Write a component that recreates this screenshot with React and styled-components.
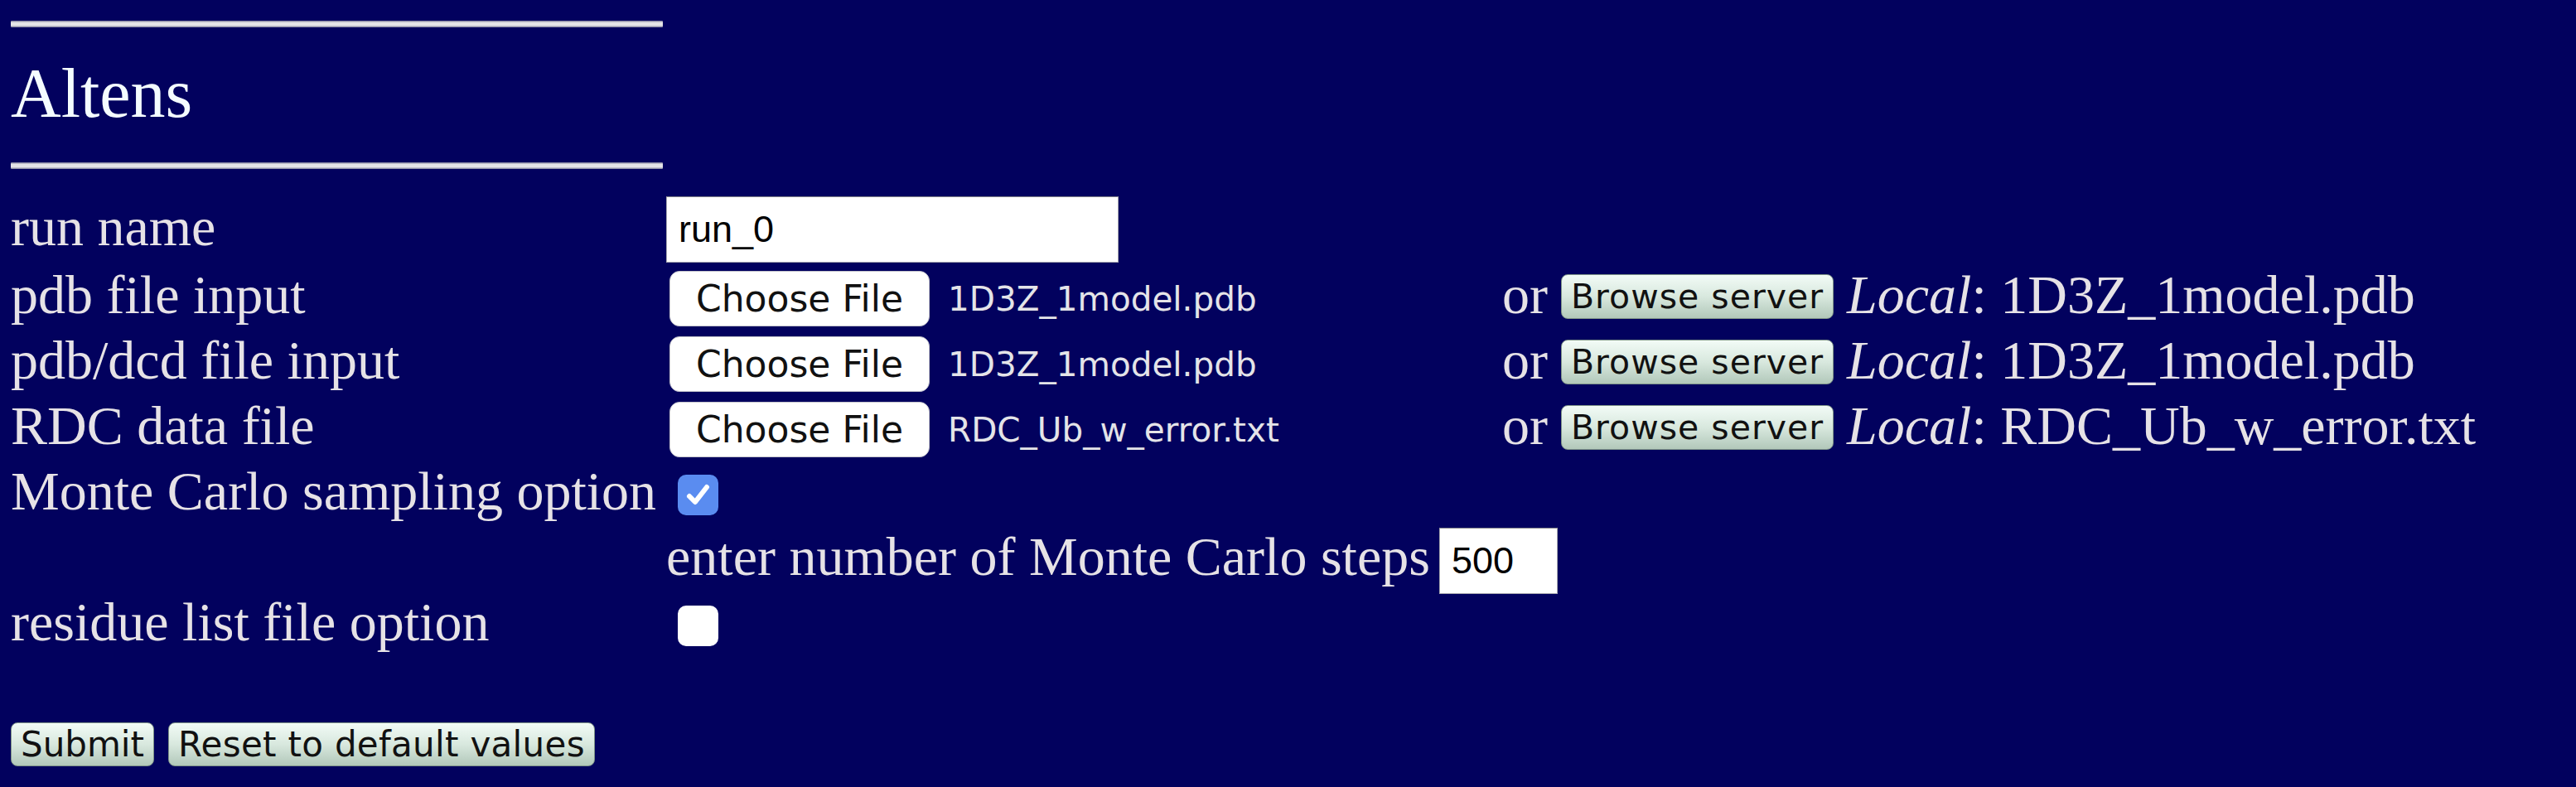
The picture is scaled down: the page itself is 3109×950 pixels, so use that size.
import React from 'react';
import styled, { createGlobalStyle } from 'styled-components';

const Global = createGlobalStyle`
  html, body { margin: 0; padding: 0; background: #02015e; }
  body { min-height: 100vh; }
`;

const Page = styled.div`
  padding: 25px 0 0 13px;
  font-family: "Liberation Serif", "Times New Roman", serif;
  font-size: 66px;
  color: #e6e2e6;
`;

const Rule = styled.div`
  width: 787px;
  height: 8px;
  margin-top: ${(p) => p.$top}px;
  background: linear-gradient(#7a7a98, #e4e4e8 30%, #e4e4e8 70%, #7a7a98);
  border-radius: 1px;
`;

const Title = styled.h2`
  margin: 37px 0 0;
  font-weight: normal;
  font-size: 84px;
  line-height: 86px;
  color: #f4fcff;
`;

const FormGrid = styled.div`
  display: grid;
  grid-template-columns: 791px 1009px auto;
  grid-template-rows: 84px repeat(6, 79px);
  align-items: center;
  margin-top: 33px;
`;

const Label = styled.div`
  padding-bottom: 10px;
  white-space: nowrap;
`;

const Cell = styled.div`
  display: flex;
  align-items: center;
  white-space: nowrap;
  grid-column: ${(p) => p.$span || 'auto'};
  gap: ${(p) => p.$gap || 0}px;
`;

const Text = styled.span`
  padding-bottom: 10px;
`;

const TextInput = styled.input`
  box-sizing: border-box;
  width: ${(p) => p.$w}px;
  height: 80px;
  margin: 0 0 ${(p) => p.$mb || 0}px ${(p) => p.$ml || 0}px;
  padding: 0 14px;
  border: 1px solid #a8a8b0;
  border-top-color: #808088;
  background: #fff;
  color: #000;
  font-family: "Liberation Sans", Arial, sans-serif;
  font-size: 45px;
  outline: none;
`;

const FileButton = styled.button`
  box-sizing: border-box;
  width: 314px;
  height: 67px;
  margin-left: 4px;
  padding: 0;
  border: 1px solid #c4c4cc;
  border-radius: 12px;
  background: #fff;
  color: #111;
  font-family: "DejaVu Sans", Verdana, sans-serif;
  font-size: 44px;
`;

const FileName = styled.span`
  margin-left: 22px;
  font-family: "DejaVu Sans", Verdana, sans-serif;
  font-size: 40.5px;
  color: #e4e4e8;
`;

const Check = styled.span`
  box-sizing: border-box;
  display: flex;
  align-items: center;
  justify-content: center;
  width: 49px;
  height: 49px;
  margin-left: 14px;
  border-radius: 10px;
  background: ${(p) => (p.$on ? '#5a8cf0' : '#ffffff')};
`;

const GreenButton = styled.button`
  box-sizing: border-box;
  height: ${(p) => p.$h}px;
  margin: 0 0 ${(p) => p.$mb || 0}px;
  padding: 0 11px;
  border: 1px solid #7f9488;
  border-radius: 8px;
  background: linear-gradient(#f2fbf6, #d8e8de 50%, #b2c8ba);
  color: #111;
  font-family: "DejaVu Sans", Verdana, sans-serif;
  font-size: ${(p) => p.$fs}px;
  letter-spacing: ${(p) => p.$ls || 0}px;
  white-space: nowrap;
`;

const Actions = styled.div`
  display: flex;
  gap: 17px;
  margin-top: 77px;
`;

const CheckMark = () => (
  <svg width="49" height="49" viewBox="0 0 49 49">
    <path d="M14 26 L21 33 L35 15" fill="none" stroke="#fff" strokeWidth="6" strokeLinecap="round" strokeLinejoin="round" />
  </svg>
);

const fileRows = [
  { label: 'pdb file input', file: '1D3Z_1model.pdb' },
  { label: 'pdb/dcd file input', file: '1D3Z_1model.pdb' },
  { label: 'RDC data file', file: 'RDC_Ub_w_error.txt' },
];

export default function App() {
  return (
    <Page>
      <Global />
      <Rule $top={0} />
      <Title>Altens</Title>
      <Rule $top={40} />
      <FormGrid>
        <Label>run name</Label>
        <Cell>
          <TextInput $w={546} $mb={4} defaultValue="run_0" />
        </Cell>
        <Cell />

        {fileRows.map((r) => (
          <React.Fragment key={r.label}>
            <Label>{r.label}</Label>
            <Cell>
              <FileButton type="button">Choose File</FileButton>
              <FileName>{r.file}</FileName>
            </Cell>
            <Cell $gap={16}>
              <Text>or</Text>
              <GreenButton type="button" $h={54} $fs={41} $ls={1} $mb={6}>
                Browse server
              </GreenButton>
              <Text>
                <i>Local</i>: {r.file}
              </Text>
            </Cell>
          </React.Fragment>
        ))}

        <Label>Monte Carlo sampling option</Label>
        <Cell>
          <Check $on>
            <CheckMark />
          </Check>
        </Cell>
        <Cell />

        <Label />
        <Cell $span="2 / 4">
          <Text>enter number of Monte Carlo steps</Text>
          <TextInput $w={143} $ml={11} defaultValue="500" />
        </Cell>

        <Label>residue list file option</Label>
        <Cell>
          <Check />
        </Cell>
        <Cell />
      </FormGrid>
      <Actions>
        <GreenButton type="button" $h={53} $fs={42}>
          Submit
        </GreenButton>
        <GreenButton type="button" $h={53} $fs={42} $ls={0.3}>
          Reset to default values
        </GreenButton>
      </Actions>
    </Page>
  );
}
